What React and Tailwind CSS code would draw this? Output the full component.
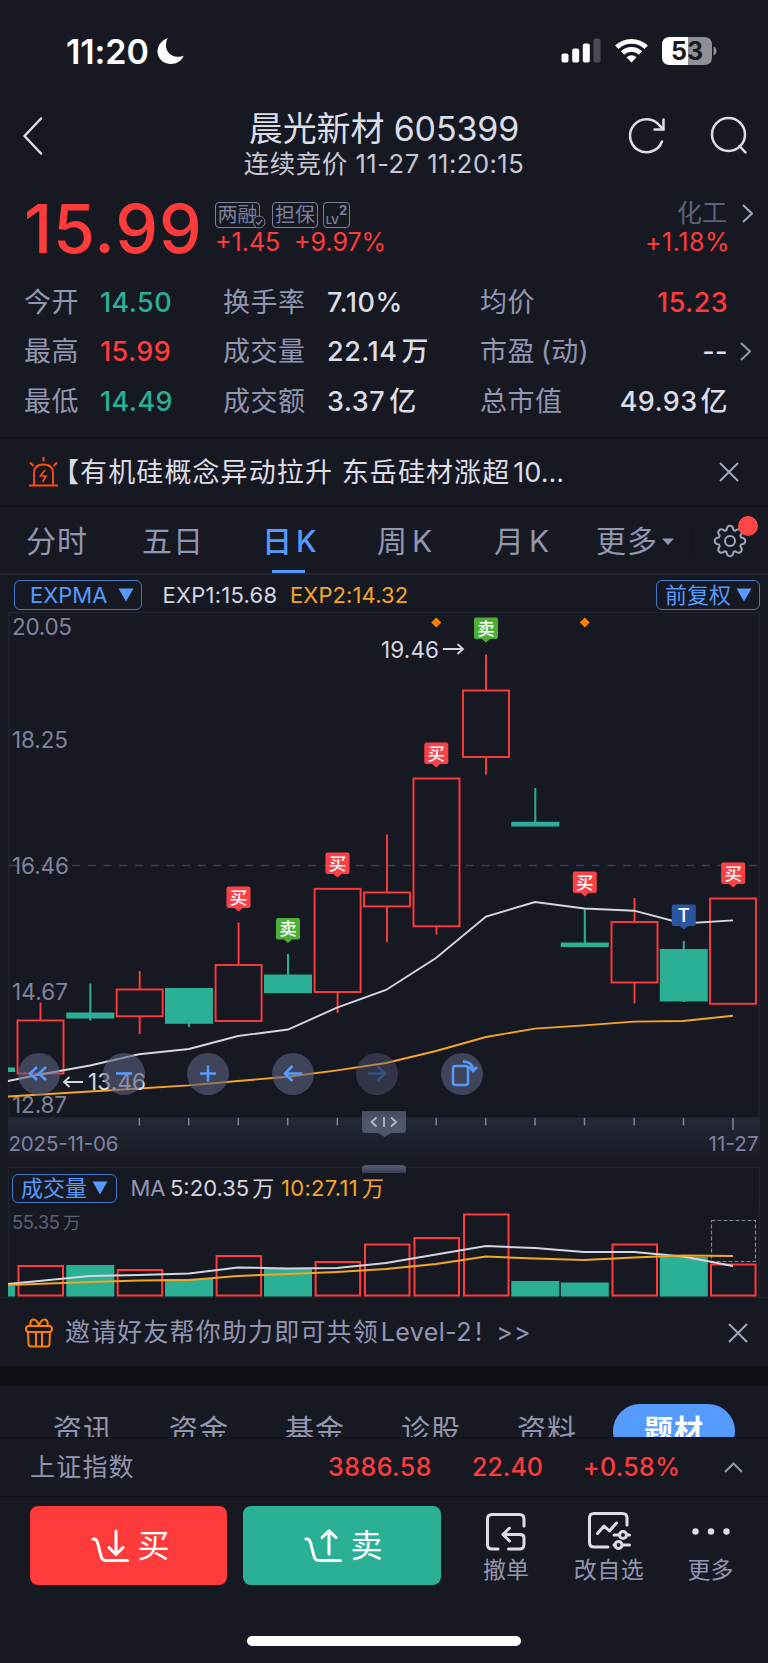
const RED = "#ff3b3b";
const GREEN = "#2bb095";
const ORANGE = "#f5a623";
const LINE = "#d5d6e0";

const stats = [
  ["今开", "14.50", "text-[#2bb095]", "换手率", "7.10%", "", "均价", "15.23", "text-[#ff3b3b]", false],
  ["最高", "15.99", "text-[#ff3b3b]", "成交量", "22.14", "万", "市盈", "--", "text-[#dcdde8]", true],
  ["最低", "14.49", "text-[#2bb095]", "成交额", "3.37", "亿", "总市值", "49.93", "text-[#dcdde8]", false],
];

// x centre, body top, body bottom, wick top, wick bottom, up
const candles = [
  [40.5, 1020.5, 1073.5, 1002.5, 1073.5, true],
  [90.3, 1012.5, 1018.5, 983.5, 1020.5, false],
  [139.7, 989.5, 1016.3, 971, 1034, true],
  [189, 988, 1023.8, 988, 1027, false],
  [238.6, 965, 1021, 922.5, 1021, true],
  [288, 974.5, 993.2, 954, 993, false],
  [337.6, 888.8, 992, 888.8, 1013, true],
  [387, 892.5, 906.4, 834.5, 942.3, true],
  [436.5, 778.5, 926.3, 778.5, 934.5, true],
  [486, 690.5, 757, 654.5, 774.5, true],
  [535.3, 821.8, 826.5, 788, 826, false],
  [584.8, 942.5, 947, 908.6, 946, false],
  [634.5, 922, 982.5, 898, 1003.5, true],
  [683.8, 949, 1001.5, 941, 1002, false],
  [733, 898.5, 1003.8, 898.5, 1003.8, true],
];

const volumes = [1266, 1265, 1270, 1279, 1256, 1269, 1262, 1244.5, 1238, 1214.5, 1281, 1282.5, 1244.5, 1257, 1264.5];

const exp1 =
  "8,1081 40,1074.500 90,1065.500 139,1054.300 189,1049 238,1036 288,1029.500 337,1007.700 386,990 436,958 486,916.600 535,902 584.500,908.500 634,910.700 683,923.500 733,920.400";
const exp2 =
  "8,1096.500 139,1088.500 189,1085.400 238,1081 288,1076.800 337,1070.400 386,1063 436,1051 486,1037 535,1028.600 584,1025.400 634,1021.600 683,1021 733,1015.700";
const ma5 =
  "8,1284 90,1276 139,1275 189,1273.5 238,1267.5 288,1268.5 337,1268 386,1263 436,1254.5 486,1246 535,1248 584,1252 634,1252 683,1256.5 733,1266";
const ma10 =
  "8,1285 90,1282 139,1280.5 189,1280 238,1276 288,1274 337,1272 386,1269 436,1264 486,1256.5 535,1258.5 584,1260 634,1257.5 683,1255.5 733,1256";

const markers = [
  [238.5, 886.5, "买"],
  [288, 918, "卖"],
  [337.5, 852.5, "买"],
  [436.3, 742.5, "买"],
  [486, 617.5, "卖"],
  [584.8, 871.5, "买"],
  [683.8, 904.5, "T"],
  [733.2, 862.5, "买"],
];
const markerFill = { 买: "#fb4147", 卖: "#4caf37", T: "#2b55a0" };

function Chevron({ className, d = "M1 1 L10 9.5 L1 18", w = 11, h = 19 }) {
  return (
    <svg className={className} width={w} height={h} fill="none" stroke="currentColor" strokeWidth="2">
      <path d={d} />
    </svg>
  );
}

function Close({ className }) {
  return (
    <svg className={className} width="20" height="20" fill="none" stroke="#a3a6bd" strokeWidth="2">
      <path d="M1 1 L19 19 M19 1 L1 19" />
    </svg>
  );
}

function Triangle({ className }) {
  return (
    <svg className={className} width="16" height="14" fill="#559bff">
      <path d="M0.5 0.5 H15.5 L8 13.5 Z" />
    </svg>
  );
}

function StatusBar() {
  return (
    <div className="flex h-[102px] items-center pl-[66px] pr-[51px] text-white">
      <span className="w-[90px] pt-[1px] text-[34px] font-semibold tracking-[-0.1px]">11:20</span>
      <svg width="30" height="28" viewBox="0 0 30 28" fill="white">
        <path d="M12 1 C6 3 1.5 8.5 1.5 14.5 C1.5 21.5 7.5 27 15 27 C20.5 27 25.5 24 27.7 18.8 C25.5 19.8 23.5 20 21.5 19.8 C14.5 19.3 10 14.5 10 8.500 C10 5.5 10.500 3 12 1 Z" />
      </svg>
      <svg className="ml-auto" width="156" height="30" viewBox="0 0 156 30">
        <g fill="white">
          <rect x="0.500" y="17.500" width="7" height="9" rx="2" />
          <rect x="11.200" y="12.500" width="7" height="14" rx="2" />
          <rect x="21.800" y="7.500" width="7" height="19" rx="2" />
          <rect x="32.500" y="2.500" width="7" height="24" rx="2" opacity="0.220" />
        </g>
        <g fill="none" stroke="white" strokeWidth="4.800">
          <path d="M55.800 11.300 A 21 21 0 0 1 85.200 11.300" />
          <path d="M61.500 17 A 13 13 0 0 1 79.500 17" />
        </g>
        <path d="M65.500 21.300 Q70.500 17 75.500 21.300 L70.500 26.500 Z" fill="white" />
        <path d="M109 1 H127.500 V29 H109 Q101 29 101 21 V9 Q101 1 109 1 Z" fill="white" />
        <path d="M127.500 1 H143 Q151 1 151 9 V21 Q151 29 143 29 H127.500 Z" fill="#8f9095" />
        <path d="M152.500 10.500 Q155.500 12 155.500 15 Q155.500 18 152.500 19.500 Z" fill="#8f9095" />
        <text x="126" y="24" textAnchor="middle" fontSize="25" fontWeight="700" fill="#171922">
          53
        </text>
      </svg>
    </div>
  );
}

function Header() {
  return (
    <div className="relative flex h-[84px] justify-center text-[#dcdde8]">
      <svg className="absolute left-[22px] top-[14px]" width="22" height="40" fill="none" stroke="currentColor" strokeWidth="2.500">
        <path d="M19 2.500 L2.500 20 L19 37.500" strokeLinecap="round" strokeLinejoin="round" />
      </svg>
      <div className="flex flex-col items-center">
        <div className="mt-[9px] h-[36px] text-[34px] leading-[36px] tracking-[-0.150px]">晨光新材 605399</div>
        <div className="mt-[3px] h-[28px] whitespace-nowrap text-[25.500px] leading-[28px] tracking-[0.500px] text-[#c6c8d6]">
          连续竞价 11-27 11:20:15
        </div>
      </div>
      <svg className="absolute left-[626px] top-[13px]" width="124" height="42" fill="none" stroke="currentColor" strokeWidth="2.500" strokeLinecap="round">
        <path d="M36 26.500 A 16.500 16.500 0 1 1 33.500 10.500 L37 14" />
        <path d="M37.500 4.500 V14.500 H28.500" />
        <circle cx="102.500" cy="19.500" r="16.500" />
        <path d="M113.500 31 L119.500 37.500" />
      </svg>
    </div>
  );
}

function Quote() {
  return (
    <div className="flex h-[88px] text-[#ff3b3b]">
      <div className="w-[190px] pl-[24px] pt-[8px] text-[68px] font-medium leading-[68px] tracking-[0.900px]">15.99</div>
      <div className="flex flex-col pl-[25px] pt-[16px]">
        <div className="flex h-[27px] text-[#7b7f99]">
          <div className="relative flex h-[26px] w-[45px] items-center justify-center rounded-[4px] border border-current text-[20px] leading-none">
            两融
            <svg className="absolute -bottom-[2px] -right-[7px]" width="14" height="14" stroke="currentColor" fill="#171922">
              <circle cx="7" cy="7" r="6" />
              <path d="M4 7 L6.500 9.300 L10.300 5" fill="none" strokeWidth="1.300" />
            </svg>
          </div>
          <div className="ml-[12px] flex h-[26px] w-[46px] items-center justify-center rounded-[4px] border border-current text-[20px] leading-none">
            担保
          </div>
          <div className="ml-[5px] flex h-[26px] w-[27px] justify-center rounded-[4px] border border-current">
            <span className="mt-[11px] text-[11px] font-semibold leading-[12px]">LV</span>
            <span className="mt-[1px] text-[13px] font-bold leading-[13px]">2</span>
          </div>
        </div>
        <div className="flex gap-[14px] text-[25px] leading-[26px]">
          <span className="w-[65px]">+1.45</span>
          <span>+9.97%</span>
        </div>
      </div>
      <div className="ml-auto flex flex-col items-end pt-[13px]">
        <div className="flex h-[28px] items-center text-[25px] leading-[28px] text-[#5d617b]">
          化工
          <Chevron className="ml-[15px] mr-[15px] text-[#a3a6bd]" />
        </div>
        <div className="mr-[38px] mt-[1px] text-[25px] leading-[28px] tracking-[0.500px]">+1.18%</div>
      </div>
    </div>
  );
}

function Stats() {
  return (
    <div className="flex h-[163px] flex-col pt-[4px] text-[27px] leading-[49px]">
      {stats.map((s) => (
        <div key={s[0]} className="flex h-[49.300px] items-center whitespace-nowrap pl-[24px] text-[#9396b0]">
          <span className="w-[76px] tracking-[0.5px]">{s[0]}</span>
          <span className={`w-[123px] font-medium tracking-[0.400px] ${s[2]}`}>{s[1]}</span>
          <span className="w-[104px] tracking-[0.5px]">{s[3]}</span>
          <span className="w-[153px] font-medium tracking-[0.500px] text-[#dcdde8]">
            {s[4]}
            <span className="ml-[4px]">{s[5]}</span>
          </span>
          <span className="tracking-[0.5px]">
            {s[6]}
            {s[9] && <span className="ml-[6px]">(动)</span>}
          </span>
          <span className={`ml-auto font-medium tracking-[0.400px] ${s[8]} ${s[9] ? "" : "pr-[40px]"}`}>
            {s[7]}
            {s[6] === "总市值" && <span className="ml-[3px]">亿</span>}
          </span>
          {s[9] && <Chevron className="ml-[12px] mr-[17px]" />}
        </div>
      ))}
    </div>
  );
}

function News() {
  return (
    <div className="flex h-[70px] items-center border-y border-[#10131a] pl-[28px] pr-[29px]">
      <svg width="30" height="32" viewBox="0 0 30 32" fill="none" stroke="#ff4a12" strokeWidth="1.900">
        <path d="M1 29.500 H30 M6 29.500 V17 Q6 8.500 15.500 8.500 Q25 8.500 25 17 V29.500" />
        <path d="M15.500 1 V5.500 M2 6.500 L5.500 10 M29 6.500 L25.500 10" />
        <path d="M17 14 L12.500 20 H18 L14.500 26" strokeWidth="1.700" />
      </svg>
      <span className="-ml-[6px] whitespace-nowrap pt-[1px] text-[27px] leading-[34px] tracking-[1.100px] text-[#dcdde8]">
        【有机硅概念异动拉升 东岳硅材涨超<span className="ml-[3px] tracking-[0px]">10...</span>
      </span>
      <Close className="ml-auto" />
    </div>
  );
}

function PeriodTabs() {
  return (
    <div className="relative flex h-[68px] items-center border-b-2 border-[#222530] pt-[2px] text-[30px] leading-none tracking-[1px] text-[#9396b0]">
      <span className="w-[116px] pl-[26px]">分时</span>
      <span className="w-[120px] pl-[26px]">五日</span>
      <span className="relative flex h-full w-[116px] items-center pl-[26px] font-medium text-[#559bff]">
        日<span className="ml-[3px]">K</span>
        <i className="absolute bottom-0 left-[36px] h-[3px] w-[33px] bg-[#559bff]" />
      </span>
      <span className="w-[118px] pl-[25px]">
        周<span className="ml-[4px]">K</span>
      </span>
      <span className="w-[126px] pl-[24px]">
        月<span className="ml-[4px]">K</span>
      </span>
      <span>更多</span>
      <svg className="ml-[4px]" width="12" height="7" fill="#9396b0">
        <path d="M0 0.500 H12 L6 7 Z" />
      </svg>
      <span className="ml-[18px] h-[24px] w-px bg-[#10131a]" />
      <svg className="ml-[20px]" width="34" height="34" viewBox="-17 -17 34 34" fill="none" stroke="#a3a6bd" strokeWidth="2" strokeLinejoin="round">
        <path d="M-3.500 -11 Q-3 -15.300 0 -15.300 Q3 -15.300 3.500 -11 L5.300 -10.300 Q8.700 -13 10.800 -10.800 Q13 -8.700 10.300 -5.300 L11 -3.500 Q15.300 -3 15.300 0 Q15.300 3 11 3.500 L10.300 5.300 Q13 8.700 10.800 10.800 Q8.700 13 5.300 10.300 L3.500 11 Q3 15.300 0 15.300 Q-3 15.300 -3.500 11 L-5.300 10.300 Q-8.700 13 -10.800 10.800 Q-13 8.700 -10.300 5.300 L-11 3.500 Q-15.300 3 -15.300 0 Q-15.300 -3 -11 -3.500 L-10.300 -5.300 Q-13 -8.700 -10.800 -10.800 Q-8.700 -13 -5.300 -10.300 Z" />
        <circle r="5" />
      </svg>
      <i className="absolute left-[738px] top-[9px] h-[20px] w-[20px] rounded-full bg-[#ff4646]" />
    </div>
  );
}

function IndicatorBar() {
  return (
    <div className="flex h-[36px] items-center whitespace-nowrap pl-[14px] pr-[8px] pt-[3px] text-[22px] leading-none">
      <div className="flex h-[30px] w-[128px] items-center rounded-[6px] border border-[#4079c6] pl-[15px] text-[#559bff]">
        <span className="w-[88px]">EXPMA</span>
        <Triangle />
      </div>
      <span className="ml-[20.500px] w-[127.500px] tracking-[0.250px] text-[#d5d6e0]">EXP1:15.68</span>
      <span className="tracking-[0.100px] text-[#f5a623]">EXP2:14.32</span>
      <div className="ml-auto flex h-[30px] w-[104px] items-center rounded-[6px] border border-[#4079c6] pl-[8px] text-[#559bff]">
        <span className="w-[71px]">前复权</span>
        <Triangle />
      </div>
    </div>
  );
}

function Marker({ x, y, label }) {
  return (
    <g>
      <path
        d={`M${x - 10} ${y} h20 q2 0 2 2 v17.500 q0 2 -2 2 h-6 l-4 3.500 l-4 -3.500 h-6 q-2 0 -2 -2 v-17.500 q0 -2 2 -2 Z`}
        fill={markerFill[label]}
      />
      <text x={x} y={y + 17} textAnchor="middle" fontSize={label === "T" ? 19 : 17.5} fontWeight="500" fill="white">
        {label}
      </text>
    </g>
  );
}

function KLine() {
  return (
    <svg className="block" width="768" height="556" viewBox="0 611 768 556">
      <defs>
        <linearGradient id="axis" x1="0" y1="0" x2="0" y2="1">
          <stop offset="0" stopColor="#242838" />
          <stop offset="1" stopColor="#171922" />
        </linearGradient>
        <linearGradient id="handle" x1="0" y1="0" x2="0" y2="1">
          <stop offset="0" stopColor="#434960" />
          <stop offset="0.400" stopColor="#50566c" />
          <stop offset="1" stopColor="#50566c" />
        </linearGradient>
      </defs>
      <path d="M9 1117 V612.500 H759 V1117" fill="none" stroke="#222530" strokeWidth="1.500" />
      <rect x="8" y="1117.500" width="752" height="50" fill="url(#axis)" />
      <path d="M9 865.500 H759" stroke="#3a3d51" strokeWidth="1.500" strokeDasharray="8 7.750" />
      <g fontSize="22.500" fill="#80839b">
        <text x="12" y="635" textLength="60">20.05</text>
        <text x="12" y="747.500" textLength="56">18.25</text>
        <text x="12" y="874" textLength="57">16.46</text>
        <text x="12" y="1000" textLength="56">14.67</text>
        <text x="12" y="1113" textLength="55">12.87</text>
      </g>
      <g fill="none" strokeWidth="1.900">
        {candles.map(([x, top, bottom, high, low, up], i) =>
          up ? (
            <g key={i} stroke={RED}>
              <rect x={x - 23} y={top} width="46" height={bottom - top} />
              <path d={`M${x} ${high} V${top} M${x} ${bottom} V${low}`} />
            </g>
          ) : (
            <g key={i}>
              <rect x={x - 24} y={top} width="48" height={bottom - top} fill={GREEN} />
              <path d={`M${x} ${high} V${low}`} stroke={GREEN} strokeWidth="2" />
            </g>
          )
        )}
        <rect x="8" y="1067.500" width="7" height="4.500" fill={GREEN} />
        <polyline points={exp1} stroke={LINE} />
        <polyline points={exp2} stroke={ORANGE} />
      </g>
      <g fontSize="22.500" fill="#d5d6e0">
        <text x="381" y="657.500" textLength="58">19.46</text>
        <text x="88" y="1090" textLength="58">13.46</text>
      </g>
      <g fill="none" stroke="#d5d6e0" strokeWidth="1.800">
        <path d="M443 649 H463 M457.500 644 L463 649 L457.500 654" />
        <path d="M83 1082 H64 M69.500 1077 L64 1082 L69.500 1087" />
      </g>
      <path d="M436.300 617.500 l5 5 l-5 5 l-5 -5 Z M584.800 617.500 l5 5 l-5 5 l-5 -5 Z" fill="#ff8000" />
      {markers.map(([x, y, label]) => (
        <Marker key={x} x={x} y={y} label={label} />
      ))}
      {candles.slice(2, 14).map(([x]) => (
        <path key={x} d={`M${x - 0.3} 1118 V1125.500`} stroke="#80839b" strokeWidth="1.500" />
      ))}
      <path d="M733 1118 V1130" stroke="#80839b" strokeWidth="1.500" />
      <path d="M362 1111 H406 V1130 Q406 1133 403 1133 H391 L384.500 1137 L378 1133 H365 Q362 1133 362 1130 Z" fill="url(#handle)" />
      <path d="M376.500 1117.500 L371.500 1122 L376.500 1126.500 M391 1117.500 L396 1122 L391 1126.500 M384 1117 V1127" fill="none" stroke="#b5b8ca" strokeWidth="1.800" />
      <g fontSize="20.500" fill="#80839b">
        <text x="8.500" y="1151" textLength="110">2025-11-06</text>
        <text x="708.500" y="1151" textLength="50">11-27</text>
      </g>
      <path d="M362 1168 Q362 1165 366 1165 H402 Q406 1165 406 1168 Z" fill="#50566c" />
    </svg>
  );
}

const controls = [
  <path d="M19 14 L12 20.500 L19 27 M28 14 L21 20.500 L28 27" />,
  <path d="M13 20.500 H29" />,
  <path d="M13 20.500 H29 M21 12.500 V28.500" />,
  <path d="M30 20.500 H13 M20.500 13 L13 20.500 L20.500 28" />,
  <path d="M12 20.500 H29 M21.500 13 L29 20.500 L21.500 28" />,
  <path d="M14.500 13 H24.500 Q27 13 27 15.500 V29.500 Q27 32 24.500 32 H14.500 Q12 32 12 29.500 V15.500 Q12 13 14.500 13 Z M22 8.500 Q31.500 8.500 32.500 17.500 M28 13.500 L32 18 L36 14" />,
];

function Chart() {
  return (
    <div className="relative h-[556px]">
      <KLine />
      <div className="absolute left-[18px] top-[442px] flex gap-[42.600px]">
        {controls.map((icon, i) => (
          <button
            key={i}
            className={`h-[42px] w-[42px] rounded-full ${i === 4 ? "bg-[#5b6080]/40" : "bg-[#5b6080]/60"}`}
          >
            <svg
              width="42"
              height="42"
              fill="none"
              stroke={i === 4 ? "#35507f" : "#559bff"}
              strokeWidth="2.600"
            >
              {icon}
            </svg>
          </button>
        ))}
      </div>
    </div>
  );
}

function Volume() {
  return (
    <div>
      <div className="relative mx-[8px] flex h-[38px] items-center whitespace-nowrap border-x border-t border-[#222530] pl-[3px] pt-[3px] text-[22px] leading-none">
        <i className="absolute left-[353px] top-[-1px] h-[6px] w-[44px] bg-linear-to-b from-[#50566c] to-[#363c50]" />
        <div className="flex h-[29px] w-[105px] items-center rounded-[6px] border border-[#4079c6] pl-[8px] text-[#559bff]">
          <span className="w-[71px]">成交量</span>
          <Triangle />
        </div>
        <span className="ml-[13.500px] w-[39.500px] text-[#9396b0]">MA</span>
        <span className="w-[111px] text-[#d5d6e0]">
          5:20.35<span className="ml-[3px]">万</span>
        </span>
        <span className="tracking-[0.300px] text-[#f5a623]">
          10:27.11<span className="ml-[4px]">万</span>
        </span>
      </div>
      <svg className="block" width="768" height="93" viewBox="0 1205 768 93">
        <path d="M9 1205 V1297 M759 1205 V1297 M0 1297.500 H768" stroke="#222530" strokeWidth="1.500" />
        <g fontSize="18.500" fill="#5c5f74">
          <text x="12" y="1229" textLength="48">55.35</text>
          <text x="63" y="1229" fontSize="17.500">万</text>
        </g>
        {candles.map(([x, , , , , up], i) =>
          up ? (
            <rect key={i} x={x - 22} y={volumes[i]} width="44.500" height={1295.5 - volumes[i]} fill="none" stroke={RED} strokeWidth="2" />
          ) : (
            <rect key={i} x={x - 24} y={volumes[i]} width="48" height={1296.5 - volumes[i]} fill={GREEN} />
          )
        )}
        <rect x="8" y="1286" width="7" height="10.500" fill={GREEN} />
        <rect x="711.500" y="1220.500" width="44" height="41" fill="none" stroke="#80839b" strokeWidth="1.200" strokeDasharray="4 2" />
        <polyline points={ma5} fill="none" stroke={LINE} strokeWidth="2" />
        <polyline points={ma10} fill="none" stroke={ORANGE} strokeWidth="2" />
      </svg>
    </div>
  );
}

function Promo() {
  return (
    <div className="flex h-[68px] items-center pl-[25px] pr-[20px] pt-[1px] text-[#9396b0]">
      <svg width="28" height="30" viewBox="0 0 28 30" fill="none" stroke="#ff8000" strokeWidth="2">
        <rect x="1" y="8" width="26" height="6" rx="3" />
        <path d="M3 14 L3.500 26 Q3.700 28.500 6 28.500 H22 Q24.300 28.500 24.500 26 L25 14 M11 14 V28.500 M17 14 V28.500" />
        <path d="M14 8 Q12 1 8 1.500 Q4.500 2.500 5.500 8 M14 8 Q16 1 20 1.500 Q23.500 2.500 22.500 8" />
      </svg>
      <span className="ml-[12px] whitespace-nowrap text-[25px] leading-none tracking-[1.150px]">
        邀请好友帮你助力即可共领<span className="ml-[2px] tracking-[0.400px]">Level-2</span>
        <span className="ml-[3px]">!</span>
        <span className="ml-[13px]">&gt;&gt;</span>
      </span>
      <Close className="ml-auto" />
    </div>
  );
}

function InfoTabs() {
  return (
    <div className="h-[52px] overflow-hidden border-b border-[#10131a]">
      <div className="flex pt-[18px] text-[29px] leading-none tracking-[1px] text-[#9396b0]">
        {["资讯", "资金", "基金", "诊股", "资料"].map((t) => (
          <span key={t} className="w-[116px] shrink-0 pl-[53px] pt-[12px]">
            {t}
          </span>
        ))}
        <span className="ml-[33px] h-[54px] w-[122px] shrink-0 rounded-full bg-[#559bff] pt-[12px] text-center font-bold text-white">
          题材
        </span>
      </div>
    </div>
  );
}

function IndexBar() {
  return (
    <div className="flex h-[59px] items-center border-b border-[#10131a] pt-[1px] text-[25px] font-medium leading-none text-[#ff3b3b]">
      <span className="w-[328px] pl-[30px] font-normal tracking-[1.200px] text-[#9396b0]">上证指数</span>
      <span className="w-[144px] tracking-[0.500px]">3886.58</span>
      <span className="w-[111px]">22.40</span>
      <span className="tracking-[0.300px]">+0.58%</span>
      <Chevron className="ml-auto mr-[25px] text-[#9396b0]" d="M1 10 L9.500 1.500 L18 10" w={19} h={11} />
    </div>
  );
}

function ActionBar() {
  return (
    <div className="flex h-[88px] pl-[30px] pt-[9px] text-[32px] leading-none text-white">
      <button className="flex h-[79px] w-[197px] items-center justify-center gap-[8px] rounded-[8px] bg-[#ff3b3b] pl-[4px]">
        <svg width="38" height="34" fill="none" stroke="currentColor" strokeWidth="3" strokeLinecap="round" strokeLinejoin="round">
          <path d="M2 10 Q5.500 9.500 6.500 13.500 L10 27 Q11 31.500 15 31.500 H36.500 M25 2 V25 M18 18.500 L25 25.500 L32 18.500" />
        </svg>
        <span className="pt-[1px]">买</span>
      </button>
      <button className="ml-[16px] flex h-[79px] w-[198px] items-center justify-center gap-[8px] rounded-[8px] bg-[#2bb095] pl-[3px]">
        <svg width="38" height="34" fill="none" stroke="currentColor" strokeWidth="3" strokeLinecap="round" strokeLinejoin="round">
          <path d="M2 10 Q5.500 9.500 6.500 13.500 L10 27 Q11 31.500 15 31.500 H36.500 M25 25 V2 M18 8.500 L25 1.800 L32 8.500" />
        </svg>
        <span className="pt-[1px]">卖</span>
      </button>
      <div className="ml-[16px] flex text-[23px] text-[#9396b0]">
        <div className="flex w-[98px] flex-col items-center">
          <svg className="mt-[5px]" width="42" height="42" fill="none" stroke="#dcdde8" strokeWidth="3" strokeLinecap="round" strokeLinejoin="round">
            <path d="M39 15 V8 Q39 3.500 34.500 3.500 H7 Q2.500 3.500 2.500 8 V33.500 Q2.500 38 7 38 H13" />
            <path d="M23.500 38 H34.500 Q39 38 39 33.500 V27 Q39 23.500 35 23.500 H18 M24.500 17 L18 23.500 L24.500 30" />
          </svg>
          <span className="mt-[6px]">撤单</span>
        </div>
        <div className="flex w-[108px] flex-col items-center">
          <svg className="mt-[5px]" width="44" height="42" fill="none" stroke="#dcdde8" strokeWidth="3" strokeLinecap="round" strokeLinejoin="round">
            <path d="M40 14 V7 Q40 2.500 35.500 2.500 H7 Q2.500 2.500 2.500 7 V31.500 Q2.500 36 7 36 H21" />
            <path d="M10.500 22.500 L17 15 L22.500 20 L29.500 12" />
            <path d="M27 24 H32 M40 24 H42.500 M27 34 H28 M35.500 34 H42.500" />
            <circle cx="36" cy="24" r="3.500" />
            <circle cx="31.500" cy="34" r="3.500" />
          </svg>
          <span className="mt-[6px] tracking-[0.500px]">改自选</span>
        </div>
        <div className="flex w-[95px] flex-col items-center">
          <svg className="mt-[5px]" width="42" height="42" fill="#dcdde8">
            <circle cx="5.500" cy="20.500" r="3.200" />
            <circle cx="21" cy="20.500" r="3.200" />
            <circle cx="36.500" cy="20.500" r="3.200" />
          </svg>
          <span className="mt-[6px]">更多</span>
        </div>
      </div>
    </div>
  );
}

export default function App() {
  return (
    <div className="h-[1663px] w-[768px] overflow-hidden bg-[#171922] font-[Inter,'Noto_Sans_CJK_SC',sans-serif]">
      <StatusBar />
      <Header />
      <Quote />
      <Stats />
      <News />
      <PeriodTabs />
      <IndicatorBar />
      <Chart />
      <Volume />
      <Promo />
      <div className="h-[20px] bg-[#0d1015]" />
      <InfoTabs />
      <IndexBar />
      <ActionBar />
      <div className="mx-auto mt-[51px] h-[10px] w-[274px] rounded-full bg-white" />
    </div>
  );
}
